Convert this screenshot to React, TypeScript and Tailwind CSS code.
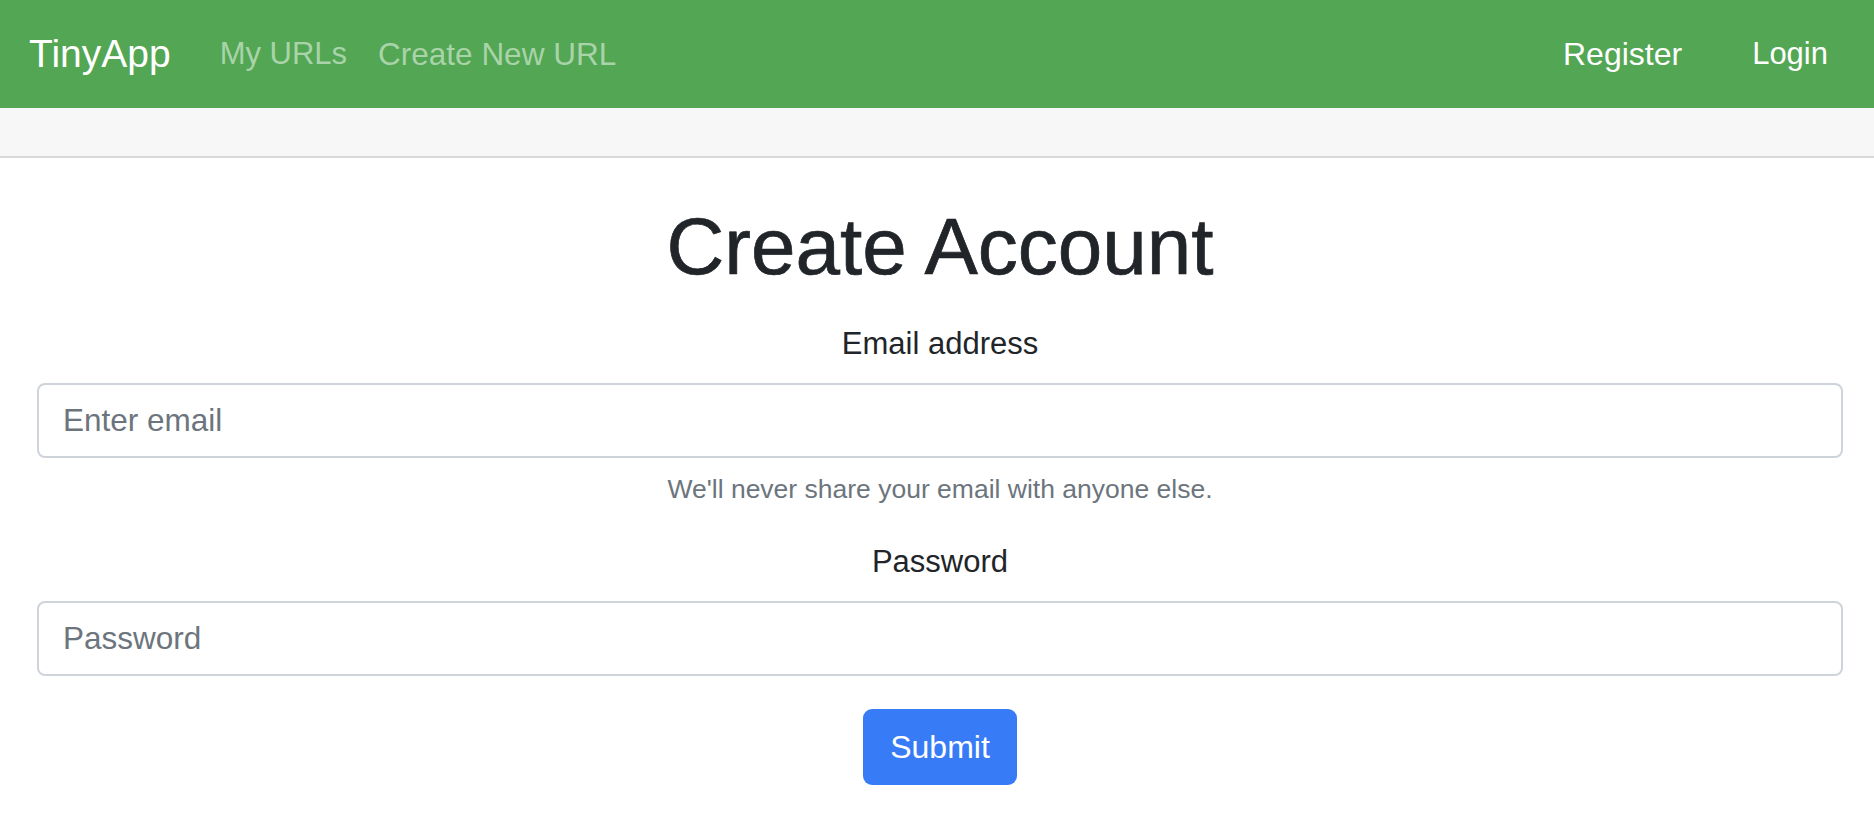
import React from 'react';

export default function App() {
  return (
    <div className="min-h-screen bg-white font-['Liberation_Sans',Arial,sans-serif] text-[#212529]">
      <nav className="flex h-[108px] items-center bg-[#53a653] pl-[29px] pr-[31px]">
        <a href="#" className="mr-[34px] text-[39px] leading-[58px] text-white">TinyApp</a>
        <div className="flex items-center">
          <a href="#" className="px-[15px] text-[31px] leading-[46px] text-[#a9d3a9]">My URLs</a>
          <a href="#" className="px-[16px] text-[31.5px] leading-[46px] text-[#a9d3a9]">Create New URL</a>
        </div>
        <div className="ml-auto flex items-center gap-[40px]">
          <a href="#" className="px-[15px] text-[32px] leading-[46px] text-white">Register</a>
          <a href="#" className="px-[15px] text-[31px] leading-[46px] text-white">Login</a>
        </div>
      </nav>

      <div className="h-[50px] border-b-2 border-[#d9d9d9] bg-[#f7f7f7]" />

      <main className="ml-[37px] mr-[31px] pt-[42px] text-center">
        <h1 className="mb-[27px] text-[80px] leading-[94px] [-webkit-text-stroke:0.7px_#212529]">Create Account</h1>
        <form onSubmit={(e) => e.preventDefault()}>
          <div className="mb-[30px]">
            <label className="mb-[16px] block text-[31px] leading-[46px]">Email address</label>
            <input
              type="email"
              placeholder="Enter email"
              className="block h-[75px] w-full rounded-[8px] border-2 border-[#ced4da] bg-white px-[24px] text-[31.5px] text-[#495057] outline-none placeholder:text-[#6c757d]"
            />
            <small className="mt-[12px] block text-[26.5px] leading-[39px] text-[#6c757d]">
              We'll never share your email with anyone else.
            </small>
          </div>
          <div className="mb-[33px]">
            <label className="mb-[16px] block text-[31px] leading-[46px]">Password</label>
            <input
              type="password"
              placeholder="Password"
              className="block h-[75px] w-full rounded-[8px] border-2 border-[#ced4da] bg-white px-[24px] text-[31.5px] text-[#495057] outline-none placeholder:text-[#6c757d]"
            />
          </div>
          <button
            type="submit"
            className="h-[76px] w-[154px] rounded-[9px] bg-[#377cf6] text-[32px] text-white"
          >
            Submit
          </button>
        </form>
      </main>
    </div>
  );
}
